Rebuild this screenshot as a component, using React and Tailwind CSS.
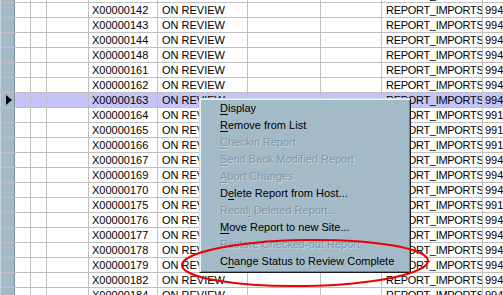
import React from "react";

// grid rows: id, code (first row is the one cut off at the top)
const ROWS = [
  ["X00000141", "994"],
  ["X00000142", "994"],
  ["X00000143", "994"],
  ["X00000144", "994"],
  ["X00000148", "994"],
  ["X00000161", "994"],
  ["X00000162", "994"],
  ["X00000163", "994"],
  ["X00000164", "991"],
  ["X00000165", "991"],
  ["X00000166", "991"],
  ["X00000167", "994"],
  ["X00000169", "994"],
  ["X00000170", "994"],
  ["X00000175", "991"],
  ["X00000176", "994"],
  ["X00000177", "994"],
  ["X00000178", "994"],
  ["X00000179", "994"],
  ["X00000182", "994"],
  ["X00000184", "994"],
];

const SELECTED = "X00000163";

// label, index of the mnemonic letter, disabled
const MENU = [
  ["Display", 0, false],
  ["Remove from List", 0, false],
  ["Checkin Report", 0, true],
  ["Send Back Modified Report", 0, true],
  ["Abort Changes", 0, true],
  ["Delete Report from Host...", 1, false],
  ["Recall Deleted Report...", 5, true],
  ["Move Report to new Site...", 0, false],
  ["Restore Checked-out Report", -1, true],
  ["Change Status to Review Complete", 1, false],
];

const cell = "h-full shrink-0 overflow-hidden whitespace-nowrap border-r border-[#c0c0c0]";

const Row = ({ id, code }) => {
  const sel = id === SELECTED;
  const bg = sel ? "bg-[#c4c4f8]" : "bg-white";
  return (
    <div className="flex h-[15px] border-b border-[#c0c0c0] leading-[14px]">
      <div className="flex h-full w-[15px] shrink-0 items-center border-l border-r border-l-[#c6d3dc] border-r-[#7f8f9b] bg-[#a3bac8] pl-[5px]">
        {sel && <div className="h-0 w-0 border-y-[5px] border-l-[6px] border-y-transparent border-l-black" />}
      </div>
      <div className={`${cell} ${bg} w-[16px]`} />
      <div className={`${cell} ${bg} w-[16px]`} />
      <div className={`${cell} ${bg} w-[42px]`} />
      <div className={`${cell} ${bg} w-[69px] pl-[3px]`}>{id}</div>
      <div className={`${cell} ${bg} w-[90px] pl-[4px]`}>ON REVIEW</div>
      <div className={`${cell} ${bg} w-[73px]`} />
      <div className={`${cell} ${bg} w-[61px]`} />
      <div className={`${cell} ${bg} w-[101px] pl-[4px] tracking-[-0.3px]`}>REPORT_IMPORTS</div>
      <div className={`${cell} ${bg} w-[40px] pl-[2px]`}>{code}</div>
    </div>
  );
};

const MenuItem = ({ label, u, disabled }) => (
  <div
    className={`h-[17px] pl-[20px] leading-[17px] whitespace-nowrap ${
      disabled ? "text-[#7f97a6] [text-shadow:1px_1px_0_#c5d5de]" : "text-black"
    }`}
  >
    {u < 0 ? (
      label
    ) : (
      <>
        {label.slice(0, u)}
        <span className="underline underline-offset-[2px]">{label[u]}</span>
        {label.slice(u + 1)}
      </>
    )}
  </div>
);

export default function App() {
  return (
    <div
      className="relative h-[295px] w-[503px] overflow-hidden bg-white text-[11px] text-black"
      style={{ fontFamily: '"Liberation Sans", Arial, sans-serif' }}
    >
      <div className="-mt-[12px]">
        {ROWS.map(([id, code]) => (
          <Row key={id} id={id} code={code} />
        ))}
      </div>

      {/* context menu */}
      <div className="absolute left-[199px] top-[98px] w-[212px] border border-t-[#d4e0e8] border-l-[#d4e0e8] border-r-[#1c1c1c] border-b-[#1c1c1c] bg-[#a3bbc8] pt-[1px] pb-[2px] shadow-[inset_1px_1px_0_#eef4f8,inset_-1px_-1px_0_#6f8592]">
        {MENU.map(([label, u, disabled]) => (
          <MenuItem key={label} label={label} u={u} disabled={disabled} />
        ))}
      </div>

      {/* red annotation ellipse */}
      <svg className="pointer-events-none absolute left-0 top-0" width="503" height="295">
        <ellipse cx="305" cy="263" rx="123" ry="23" fill="none" stroke="#ee0000" strokeWidth="2" transform="rotate(-1 305 263)" />
      </svg>
    </div>
  );
}
